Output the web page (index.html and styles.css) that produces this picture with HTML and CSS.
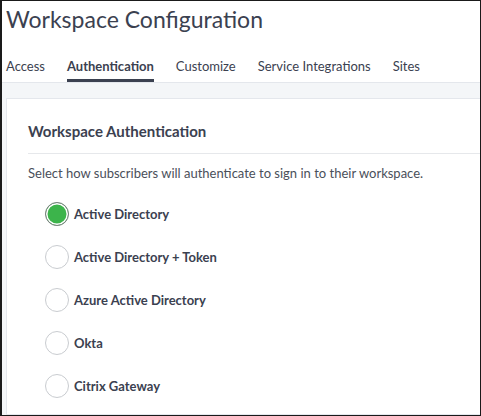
FILE: index.html
```html
<!DOCTYPE html>
<html>
<head>
<meta charset="utf-8">
<link rel="stylesheet" href="styles.css">
</head>
<body>
<div class="frame">
  <h1 class="title">Workspace Configuration</h1>
  <nav class="tabs">
    <span class="tab">Access</span>
    <span class="tab active">Authentication</span>
    <span class="tab">Customize</span>
    <span class="tab">Service Integrations</span>
    <span class="tab">Sites</span>
  </nav>
  <div class="content">
    <div class="card">
      <h2 class="card-title">Workspace Authentication</h2>
      <p class="desc">Select how subscribers will authenticate to sign in to their workspace.</p>
      <div class="options">
        <label class="option"><span class="radio checked"></span>Active Directory</label>
        <label class="option"><span class="radio"></span>Active Directory + Token</label>
        <label class="option"><span class="radio"></span>Azure Active Directory</label>
        <label class="option"><span class="radio"></span>Okta</label>
        <label class="option"><span class="radio"></span>Citrix Gateway</label>
      </div>
    </div>
  </div>
</div>
</body>
</html>
```
FILE: styles.css
```css
* { box-sizing: border-box; }
html, body { margin: 0; padding: 0; }
body {
  width: 481px;
  height: 416px;
  overflow: hidden;
  font-family: Lato, "Open Sans", sans-serif;
  color: #3b4150;
}
.frame {
  width: 481px;
  height: 416px;
  border: 1px solid #1a1a1a;
  border-left-width: 2px;
  background: #fff;
  display: flex;
  flex-direction: column;
  overflow: hidden;
}
.title {
  margin: 0;
  padding: 3px 0 0 4px;
  font-size: 23px;
  font-weight: 400;
  line-height: 30px;
  color: #3b4150;
  letter-spacing: 0;
}
.tabs {
  display: flex;
  gap: 22px;
  padding: 23px 0 0 4px;
  border-bottom: 1px solid #e4e7ec;
}
.tab {
  font-size: 13px;
  line-height: 18px;
  padding-bottom: 4px;
  color: #3b4150;
  border-bottom: 3px solid transparent;
}
.tab.active {
  border-bottom-color: #3b4150;
  font-weight: 700;
}
.content {
  flex: 1;
  background: #f4f6f8;
  padding: 15px 0 0 4px;
}
.card {
  background: #fff;
  border: 1px solid #e4e7ec;
  border-right: none;
  height: 100%;
  padding: 22px 0 0 21px;
}
.card-title {
  margin: 0;
  font-size: 15px;
  font-weight: 700;
  line-height: 20px;
  padding-bottom: 12px;
  border-bottom: 1px solid #e6e8eb;
  color: #3b4150;
}
.desc {
  margin: 0;
  padding-top: 10px;
  font-size: 13px;
  line-height: 18px;
  color: #4a4f5a;
}
.options {
  display: flex;
  flex-direction: column;
  gap: 19px;
  padding: 20px 0 0 17px;
}
.option {
  display: flex;
  align-items: center;
  gap: 5px;
  font-size: 13px;
  font-weight: 700;
  color: #3b4150;
}
.radio {
  width: 24px;
  height: 24px;
  border-radius: 50%;
  border: 1px solid #c9ccd0;
  background: #fff;
  flex: none;
}
.radio.checked {
  border: 1.5px solid #7d7f82;
  background: #3cb44b;
  box-shadow: inset 0 0 0 1.5px #fff;
}
```
